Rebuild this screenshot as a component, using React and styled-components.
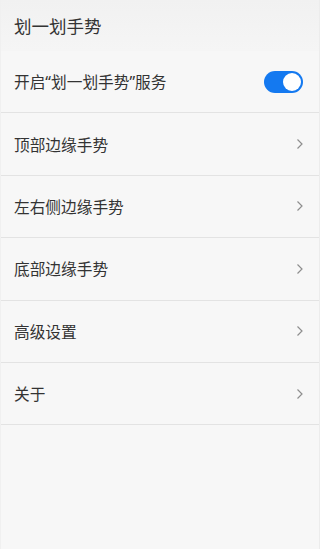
import React, { useState } from "react";
import styled, { createGlobalStyle } from "styled-components";

const GlobalStyle = createGlobalStyle`
  html, body {
    margin: 0;
    padding: 0;
    background: #f7f7f7;
  }
  body {
    font-family: "Noto Sans", "Noto Sans CJK SC", sans-serif;
  }
`;

const Page = styled.div`
  width: 320px;
  height: 549px;
  background: #f7f7f7;
  box-sizing: border-box;
  border-left: 1px solid #f0f0f0;
  border-right: 1px solid #ececec;
  overflow: hidden;
`;

const Header = styled.header`
  height: 51px;
  display: flex;
  align-items: center;
  padding: 0 13px;
  background: linear-gradient(#f1f1f1, #f5f5f5);
  font-size: 17.5px;
  color: #333;
`;

const List = styled.ul`
  list-style: none;
  margin: 0;
  padding: 0;
`;

const Row = styled.li`
  height: 61.4px;
  display: flex;
  align-items: center;
  justify-content: space-between;
  padding: 0 15px 0 13px;
  border-bottom: 1px solid #e3e3e3;
  font-size: 15.7px;
  color: #333;
`;

const Switch = styled.button`
  width: 39px;
  height: 22px;
  padding: 0;
  border: none;
  border-radius: 11px;
  background: ${(p) => (p.$on ? "#1479f0" : "#d8d8d8")};
  position: relative;
  cursor: pointer;
  margin-right: 1px;

  &::after {
    content: "";
    position: absolute;
    top: 2px;
    left: ${(p) => (p.$on ? "19px" : "2px")};
    width: 18px;
    height: 18px;
    border-radius: 50%;
    background: #fff;
  }
`;

const Chevron = () => (
  <svg width="8" height="12" viewBox="0 0 8 12" fill="none">
    <path d="M1.5 1.5 L6 6 L1.5 10.5" stroke="#8e8e8e" strokeWidth="1.2" />
  </svg>
);

const items = ["顶部边缘手势", "左右侧边缘手势", "底部边缘手势", "高级设置", "关于"];

export default function App() {
  const [on, setOn] = useState(true);
  return (
    <>
      <GlobalStyle />
      <Page>
        <Header>划一划手势</Header>
        <List>
          <Row>
            <span>开启“划一划手势”服务</span>
            <Switch $on={on} onClick={() => setOn(!on)} />
          </Row>
          {items.map((label) => (
            <Row key={label}>
              <span>{label}</span>
              <Chevron />
            </Row>
          ))}
        </List>
      </Page>
    </>
  );
}
